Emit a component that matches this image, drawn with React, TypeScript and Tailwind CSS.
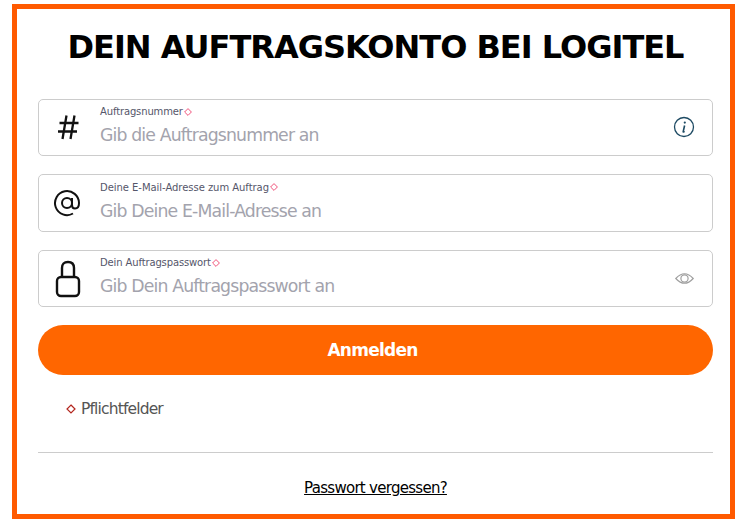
import React from "react";

const font = { fontFamily: '"DejaVu Sans", sans-serif' };

function Req() {
  return (
    <svg width="8" height="8" viewBox="0 0 8 8" className="ml-[1px] shrink-0">
      <path d="M4 0.6 L7.4 4 L4 7.4 L0.6 4 Z" fill="none" stroke="#f0527a" strokeWidth="1" />
    </svg>
  );
}

function Field({ label, placeholder, icon, right, h, track }: { label: string; placeholder: string; icon: React.ReactNode; right?: React.ReactNode; h: string; track: string }) {
  return (
    <div className={`flex ${h} items-center rounded-[5px] border border-[#cccccc] bg-white`}>
      <div className="flex w-[61px] shrink-0 items-center justify-center">{icon}</div>
      <div className="-mt-[3px] flex min-w-0 flex-1 flex-col">
        <div className={`flex h-[13px] items-center text-[10px] ${track} text-[#55566a]`}>
          {label}
          <Req />
        </div>
        <div className="mt-[5px] text-[17.3px] leading-[24px] tracking-[-0.85px] text-[#a3a3ad]">{placeholder}</div>
      </div>
      {right && <div className="flex w-[56px] shrink-0 items-center justify-center">{right}</div>}
    </div>
  );
}

export default function App() {
  return (
    <div className="h-[520px] w-[751px] bg-white px-[12px] pt-[4px]" style={font}>
      <div className="h-[515px] w-[723px] border-[5px] border-[#ff5a00] pl-[21px] pr-[17px]">
        <h1 className="mt-[18px] text-center text-[32px] font-bold leading-[40px] tracking-[-1px] text-black">
          DEIN AUFTRAGSKONTO BEI LOGITEL
        </h1>
        <div className="mt-[32px] flex flex-col gap-[18px]">
          <Field
            h="h-[57px]"
            track="tracking-[-0.13px]"
            label="Auftragsnummer"
            placeholder="Gib die Auftragsnummer an"
            icon={
              <svg width="23" height="29" viewBox="0 0 23 29" fill="none" stroke="#111" strokeWidth="2.3" className="mb-[1px] mr-[2px]">
                <path d="M9.5 2.5 L5.5 26 M17.5 2.5 L13.5 26 M2.5 10 H21.5 M1 18.5 H20" />
              </svg>
            }
            right={
              <svg width="22" height="22" viewBox="0 0 22 22" fill="none" className="mb-[1px]">
                <circle cx="11" cy="11" r="9.5" stroke="#1d4a63" strokeWidth="1.3" />
                <path d="M11.6 9.5 L10.2 15.6 Q10.1 16.4 11.6 15.4" stroke="#1d4a63" strokeWidth="1.6" />
                <circle cx="11.8" cy="6.6" r="1.1" fill="#1d4a63" />
              </svg>
            }
          />
          <Field
            h="h-[58px]"
            track="tracking-[-0.04px]"
            label="Deine E-Mail-Adresse zum Auftrag"
            placeholder="Gib Deine E-Mail-Adresse an"
            icon={
              <svg width="28" height="28" viewBox="0 0 28 28" fill="none" stroke="#111" strokeWidth="2" className="mr-[5px]">
                <circle cx="14" cy="14" r="5" />
                <path d="M19 9 V16 Q19 19.5 22 19.5 Q26 19.5 26 14 A12 12 0 1 0 20 24.5" />
              </svg>
            }
          />
          <Field
            h="h-[57px]"
            track="tracking-[-0.13px]"
            label="Dein Auftragspasswort"
            placeholder="Gib Dein Auftragspasswort an"
            icon={
              <svg width="26" height="38" viewBox="0 0 26 38" fill="none" stroke="#111" strokeWidth="2.4" className="mr-[3px]">
                <path d="M7 17 V8 Q7 2 13 2 Q19 2 19 8 V17" />
                <rect x="2" y="17" width="22" height="19" rx="4" />
              </svg>
            }
            right={
              <svg width="19" height="13" viewBox="0 0 19 13" fill="none" stroke="#a0a0a0" strokeWidth="1.2" className="mb-[1px]">
                <path d="M0.8 6.5 Q9.5 -3 18.2 6.5 Q9.5 16 0.8 6.5 Z" />
                <circle cx="9.5" cy="6.5" r="3.6" />
              </svg>
            }
          />
        </div>
        <button className="mt-[18px] flex h-[50px] w-full items-center justify-center rounded-[25px] bg-[#ff6600] pr-[6px] pt-[1px] text-[17px] font-bold tracking-[-0.75px] text-white">
          Anmelden
        </button>
        <div className="mt-[23px] flex items-center pl-[28px] text-[15.5px] leading-[22px] tracking-[-0.85px] text-[#555555]">
          <svg width="10" height="10" viewBox="0 0 10 10" className="mr-[5px]">
            <path d="M5 1 L9 5 L5 9 L1 5 Z" fill="none" stroke="#b3261e" strokeWidth="1.2" />
          </svg>
          Pflichtfelder
        </div>
        <hr className="mt-[32px] border-t border-[#cccccc]" />
        <div className="mt-[23px] text-center">
          <a href="#" className="text-[15px] leading-[20px] tracking-[-0.72px] text-black underline">Passwort vergessen?</a>
        </div>
      </div>
    </div>
  );
}
